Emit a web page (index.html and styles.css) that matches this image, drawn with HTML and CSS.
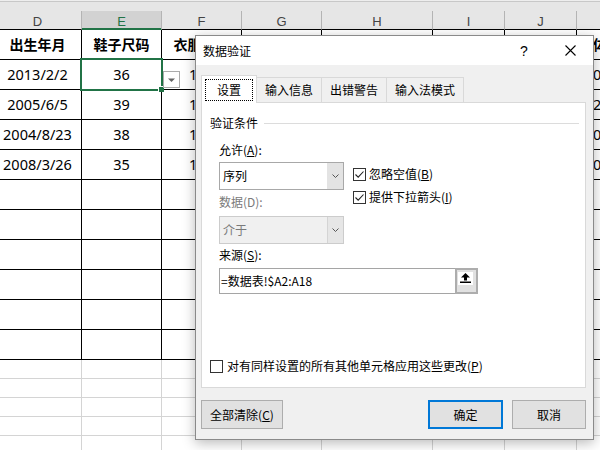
FILE: index.html
```html
<!DOCTYPE html>
<html lang="zh-CN">
<head>
<meta charset="utf-8">
<title>数据验证</title>
<link rel="stylesheet" href="styles.css">
</head>
<body>
<div class="sheet">
  <div class="topstrip"></div>
  <div class="grid">
    <div class="ch">D</div><div class="ch sel">E</div><div class="ch">F</div><div class="ch">G</div><div class="ch">H</div><div class="ch">I</div><div class="ch">J</div><div class="ch">K</div>

    <div class="c hd">出生年月</div><div class="c hd">鞋子尺码</div><div class="c hd">衣服尺码</div><div class="c"></div><div class="c"></div><div class="c"></div><div class="c"></div><div class="c hd k">体重</div>
    <div class="c">2013/2/2</div><div class="c">36</div><div class="c">165</div><div class="c"></div><div class="c"></div><div class="c"></div><div class="c"></div><div class="c k">0</div>
    <div class="c">2005/6/5</div><div class="c">39</div><div class="c">170</div><div class="c"></div><div class="c"></div><div class="c"></div><div class="c"></div><div class="c k">20</div>
    <div class="c">2004/8/23</div><div class="c">38</div><div class="c">160</div><div class="c"></div><div class="c"></div><div class="c"></div><div class="c"></div><div class="c k">0</div>
    <div class="c">2008/3/26</div><div class="c">35</div><div class="c">165</div><div class="c"></div><div class="c"></div><div class="c"></div><div class="c"></div><div class="c k">0</div>
    <div class="c"></div><div class="c"></div><div class="c"></div><div class="c"></div><div class="c"></div><div class="c"></div><div class="c"></div><div class="c"></div>
    <div class="c"></div><div class="c"></div><div class="c"></div><div class="c"></div><div class="c"></div><div class="c"></div><div class="c"></div><div class="c"></div>
    <div class="c"></div><div class="c"></div><div class="c"></div><div class="c"></div><div class="c"></div><div class="c"></div><div class="c"></div><div class="c"></div>
    <div class="c"></div><div class="c"></div><div class="c"></div><div class="c"></div><div class="c"></div><div class="c"></div><div class="c"></div><div class="c"></div>
    <div class="c"></div><div class="c"></div><div class="c"></div><div class="c"></div><div class="c"></div><div class="c"></div><div class="c"></div><div class="c"></div>
    <div class="c"></div><div class="c"></div><div class="c"></div><div class="c"></div><div class="c"></div><div class="c"></div><div class="c"></div><div class="c"></div>

    <div class="g"></div><div class="g"></div><div class="g"></div><div class="g"></div><div class="g"></div><div class="g"></div><div class="g"></div><div class="g"></div>
    <div class="g"></div><div class="g"></div><div class="g"></div><div class="g"></div><div class="g"></div><div class="g"></div><div class="g"></div><div class="g"></div>
    <div class="g"></div><div class="g"></div><div class="g"></div><div class="g"></div><div class="g"></div><div class="g"></div><div class="g"></div><div class="g"></div>
    <div class="g"></div><div class="g"></div><div class="g"></div><div class="g"></div><div class="g"></div><div class="g"></div><div class="g"></div><div class="g"></div>
    <div class="g"></div><div class="g"></div><div class="g"></div><div class="g"></div><div class="g"></div><div class="g"></div><div class="g"></div><div class="g"></div>
  </div>

  <div class="active-cell"></div>
  <div class="fill-handle"></div>
  <div class="cell-drop"><svg width="7" height="4" viewBox="0 0 7 4"><path d="M0 0.5 H7 L3.5 4 Z" fill="#666"/></svg></div>
</div>

<div class="dialog">
  <div class="titlebar">
    <span class="title">数据验证</span>
    <span class="help">?</span>
    <span class="close"><svg width="11" height="11" viewBox="0 0 11 11"><path d="M0.5 0.5 L10.5 10.5 M10.5 0.5 L0.5 10.5" stroke="#000" stroke-width="1.1" fill="none"/></svg></span>
  </div>
  <div class="body">
    <div class="tabs">
      <div class="tab active"><span class="focus">设置</span></div>
      <div class="tab">输入信息</div>
      <div class="tab">出错警告</div>
      <div class="tab">输入法模式</div>
    </div>
    <div class="panel">
      <div class="group"><span>验证条件</span><span class="rule"></span></div>
      <div class="settings">
        <div class="left">
          <div class="lbl">允许(<u>A</u>):</div>
          <div class="combo"><span class="val">序列</span><span class="drop"><svg width="7" height="4" viewBox="0 0 7 4"><path d="M0.5 0.5 L3.5 3.5 L6.5 0.5" stroke="#555" fill="none"/></svg></span></div>
          <div class="lbl lbl2 dis">数据(D):</div>
          <div class="combo combo2 disabled"><span class="val">介于</span><span class="drop"><svg width="7" height="4" viewBox="0 0 7 4"><path d="M0.5 0.5 L3.5 3.5 L6.5 0.5" stroke="#555" fill="none"/></svg></span></div>
        </div>
        <div class="checks">
          <div class="check"><span class="box"><svg width="11" height="11" viewBox="0 0 11 11"><path d="M1.5 5.5 L4.2 8.2 L9.5 2.5" stroke="#222" stroke-width="1.1" fill="none"/></svg></span>忽略空值(<u>B</u>)</div>
          <div class="check second"><span class="box"><svg width="11" height="11" viewBox="0 0 11 11"><path d="M1.5 5.5 L4.2 8.2 L9.5 2.5" stroke="#222" stroke-width="1.1" fill="none"/></svg></span>提供下拉箭头(<u>I</u>)</div>
        </div>
      </div>
      <div class="lbl lbl3">来源(<u>S</u>):</div>
      <div class="source">
        <span class="src-text">=数据表!$A2:A18</span>
        <span class="src-btn"><span class="src-icon"><svg width="15" height="13" viewBox="0 0 15 13"><path d="M7.5 1 L3 5.5 H12 Z" fill="#000"/><rect x="6" y="5" width="3" height="3.5" fill="#000"/><rect x="2" y="9.5" width="11" height="1.5" fill="#000"/></svg></span></span>
      </div>
      <div class="check apply"><span class="box"></span>对有同样设置的所有其他单元格应用这些更改(<u>P</u>)</div>
    </div>
    <div class="buttons">
      <div class="btn clear">全部清除(<u>C</u>)</div>
      <div class="spacer"></div>
      <div class="btn ok">确定</div>
      <div class="btn cancel">取消</div>
    </div>
  </div>
</div>
</body>
</html>
```

FILE: styles.css
```css
* { box-sizing: border-box; }
html, body { margin: 0; padding: 0; }
body {
  width: 600px;
  height: 450px;
  overflow: hidden;
  position: relative;
  background: #fff;
  font-family: "Noto Sans", "Noto Sans CJK SC", sans-serif;
}

/* ---------- spreadsheet ---------- */
.sheet { position: relative; }
.topstrip {
  height: 11px;
  background: linear-gradient(#eeeeee 0 1px, #c8c8c8 1px 2px, #e6e6e6 2px);
}
.grid {
  display: grid;
  grid-template-columns: 88px 80px 80px 80px 111px 72px 72px 80px;
  width: 663px;
  margin-left: -6px;
}
.ch {
  height: 19px;
  background: #e6e6e6;
  border-right: 1px solid #b4b4b4;
  border-bottom: 1px solid #000;
  color: #444;
  font-family: "Liberation Sans", sans-serif;
  font-size: 13px;
  line-height: 17px;
  padding-top: 2px;
  text-align: center;
}
.ch.sel {
  background: #d2d2d2;
  color: #217346;
  border-bottom-color: #217346;
  box-shadow: inset 0 -1px 0 #217346;
}
.c {
  height: 30px;
  border-right: 1px solid #000;
  border-bottom: 1px solid #000;
  font-size: 14.5px;
  line-height: 29px;
  text-align: center;
  white-space: nowrap;
  overflow: hidden;
  color: #000;
}
.c.hd { font-family: "Noto Sans CJK SC", sans-serif; font-weight: bold; font-size: 14px; }
.c.k { text-align: left; padding-left: 16px; }
.g {
  height: 19px;
  border-right: 1px solid #d4d4d4;
  border-bottom: 1px solid #d4d4d4;
}
.active-cell {
  position: absolute;
  left: 80px;
  top: 58px;
  width: 83px;
  height: 33px;
  border: 2px solid #217346;
}
.fill-handle {
  position: absolute;
  left: 158px;
  top: 86px;
  width: 6px;
  height: 6px;
  background: #217346;
  border: 1px solid #fff;
  border-right: none;
  border-bottom: none;
}
.cell-drop {
  position: absolute;
  left: 163px;
  top: 71px;
  width: 17px;
  height: 17px;
  background: #fff;
  border: 1px solid #ababab;
  display: flex;
  align-items: center;
  justify-content: center;
}

/* ---------- dialog ---------- */
.dialog {
  position: absolute;
  left: 195px;
  top: 35px;
  width: 399px;
  height: 405px;
  border: 1px solid #8a8a8a;
  background: #f0f0f0;
  box-shadow: 0 3px 12px rgba(0, 0, 0, 0.28);
  font-family: "Noto Sans CJK SC", sans-serif;
  font-size: 12px;
  color: #000;
  display: flex;
  flex-direction: column;
}
.titlebar {
  height: 29px;
  flex: none;
  background: #fff;
  display: flex;
  align-items: center;
  padding-left: 7px;
}
.title { flex: 1; line-height: 16px; }
.help {
  width: 46px;
  text-align: center;
  font-family: "Liberation Sans", sans-serif;
  font-size: 14px;
  line-height: 16px;
}
.close {
  width: 46px;
  display: flex;
  justify-content: center;
  align-items: center;
}
.body {
  flex: 1;
  padding: 10px 7px 10px 5px;
  display: flex;
  flex-direction: column;
}
.tabs { display: flex; height: 28px; flex: none; }
.tab {
  height: 25px;
  margin-top: 2px;
  margin-left: -1px;
  padding: 0 8px;
  border: 1px solid #d9d9d9;
  border-bottom: none;
  background: #f0f0f0;
  line-height: 24px;
  white-space: nowrap;
}
.tab.active {
  position: relative;
  z-index: 1;
  width: 56px;
  height: 28px;
  margin: 0;
  padding: 3px 3px 0;
  background: #fff;
}
.focus {
  display: block;
  width: 48px;
  height: 22px;
  border: 1px dotted #000;
  line-height: 20px;
  text-align: center;
}
.panel {
  margin-top: -1px;
  height: 286px;
  flex: none;
  background: #fff;
  border: 1px solid #d9d9d9;
  padding: 12px 0 13px 8px;
  display: flex;
  flex-direction: column;
}
.group { display: flex; align-items: center; height: 16px; line-height: 16px; }
.rule { flex: 1; height: 1px; background: #dcdcdc; margin: 0 6px; }
.settings { display: flex; margin-top: 11px; }
.left { margin-left: 9px; width: 125px; }
.lbl { line-height: 16px; height: 16px; }
.lbl.dis { color: #7a7a7a; }
.lbl2 { margin-top: 4px; }
.lbl3 { margin-top: 3px; margin-left: 9px; }
.combo {
  display: flex;
  margin-top: 4px;
  width: 125px;
  height: 28px;
  border: 1px solid #a8a8a8;
  background: #fff;
}
.combo2 { margin-top: 6px; }
.combo .val { flex: 1; padding-left: 3px; line-height: 26px; }
.combo .drop {
  width: 16px;
  background: #e3e3e3;
  display: flex;
  align-items: center;
  justify-content: center;
}
.combo.disabled { border-color: #cccccc; background: #f0f0f0; color: #7a7a7a; }
.combo.disabled .drop { background: #e6e6e6; border-left: 1px solid #d4d4d4; }
.checks { margin-left: 9px; padding-top: 24px; }
.check { display: flex; align-items: center; height: 16px; line-height: 16px; white-space: nowrap; }
.check.second { margin-top: 7px; }
.box {
  width: 13px;
  height: 13px;
  border: 1px solid #333;
  background: #fff;
  margin-right: 3px;
  display: flex;
  align-items: center;
  justify-content: center;
}
.check.apply { margin-top: auto; }
.check.apply .box { margin-right: 4px; }
.source {
  display: flex;
  margin: 5px 0 0 9px;
  width: 259px;
  height: 26px;
  border: 1px solid #a5a5a5;
  background: #fff;
}
.src-text { flex: 1; padding-left: 1px; line-height: 24px; }
.src-btn {
  width: 23px;
  height: 26px;
  margin: -1px -1px -1px 0;
  border: 2px solid #adadad;
  background: #e1e1e1;
}
.src-icon {
  display: block;
  width: 15px;
  height: 13px;
  margin: 2px 0 0 1px;
  background: #fff;
}
.src-icon svg { display: block; }
.buttons { display: flex; margin-top: 12px; height: 29px; flex: none; }
.spacer { flex: 1; }
.btn {
  height: 29px;
  border: 1px solid #adadad;
  background: #e1e1e1;
  text-align: center;
  line-height: 27px;
}
.btn.clear { width: 82px; }
.btn.ok { width: 75px; border: 2px solid #0078d7; line-height: 25px; }
.btn.cancel { width: 74px; margin-left: 9px; }
```
